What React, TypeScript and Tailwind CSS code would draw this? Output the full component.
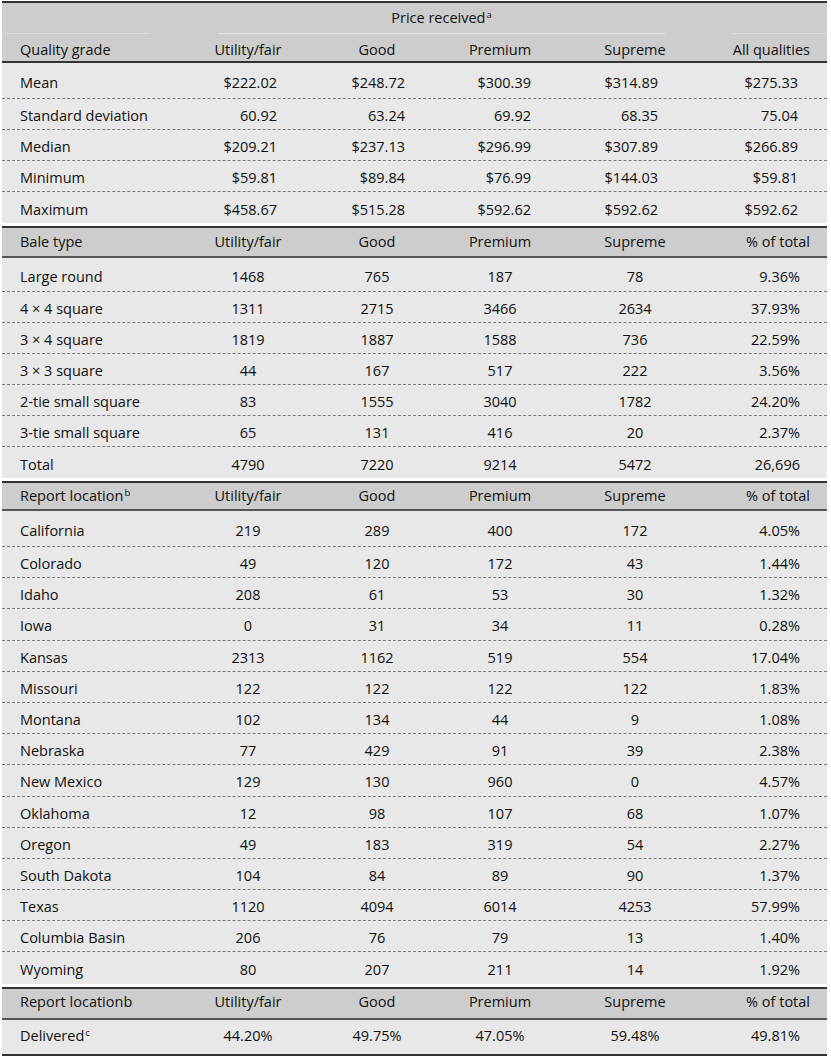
import React from "react";

const GRID = "grid grid-cols-[188px_116px_142px_104px_166px_109px]";

// value alignment per column
const money = [
  "pr-[29px] text-right",
  "pr-[43px] text-right",
  "pr-[21px] text-right",
  "pr-[60px] text-right",
  "pr-[29px] text-right",
];
const centered = ["text-center", "text-center", "text-center", "text-center", "pr-[27px] text-right"];
const headAlign = ["text-center", "text-center", "text-center", "text-center", "pr-[17px] text-right"];

const grades = ["Utility/fair", "Good", "Premium", "Supreme"];

const priceRows: [string, string[]][] = [
  ["Mean", ["$222.02", "$248.72", "$300.39", "$314.89", "$275.33"]],
  ["Standard deviation", ["60.92", "63.24", "69.92", "68.35", "75.04"]],
  ["Median", ["$209.21", "$237.13", "$296.99", "$307.89", "$266.89"]],
  ["Minimum", ["$59.81", "$89.84", "$76.99", "$144.03", "$59.81"]],
  ["Maximum", ["$458.67", "$515.28", "$592.62", "$592.62", "$592.62"]],
];

const baleRows: [string, string[]][] = [
  ["Large round", ["1468", "765", "187", "78", "9.36%"]],
  ["4 × 4 square", ["1311", "2715", "3466", "2634", "37.93%"]],
  ["3 × 4 square", ["1819", "1887", "1588", "736", "22.59%"]],
  ["3 × 3 square", ["44", "167", "517", "222", "3.56%"]],
  ["2-tie small square", ["83", "1555", "3040", "1782", "24.20%"]],
  ["3-tie small square", ["65", "131", "416", "20", "2.37%"]],
  ["Total", ["4790", "7220", "9214", "5472", "26,696"]],
];

const locationRows: [string, string[]][] = [
  ["California", ["219", "289", "400", "172", "4.05%"]],
  ["Colorado", ["49", "120", "172", "43", "1.44%"]],
  ["Idaho", ["208", "61", "53", "30", "1.32%"]],
  ["Iowa", ["0", "31", "34", "11", "0.28%"]],
  ["Kansas", ["2313", "1162", "519", "554", "17.04%"]],
  ["Missouri", ["122", "122", "122", "122", "1.83%"]],
  ["Montana", ["102", "134", "44", "9", "1.08%"]],
  ["Nebraska", ["77", "429", "91", "39", "2.38%"]],
  ["New Mexico", ["129", "130", "960", "0", "4.57%"]],
  ["Oklahoma", ["12", "98", "107", "68", "1.07%"]],
  ["Oregon", ["49", "183", "319", "54", "2.27%"]],
  ["South Dakota", ["104", "84", "89", "90", "1.37%"]],
  ["Texas", ["1120", "4094", "6014", "4253", "57.99%"]],
  ["Columbia Basin", ["206", "76", "79", "13", "1.40%"]],
  ["Wyoming", ["80", "207", "211", "14", "1.92%"]],
];

const Sup = ({ children }: { children: React.ReactNode }) => (
  <sup className="text-[9.5px] ml-[1px]">{children}</sup>
);

function HeadRow({
  label,
  last,
  height,
}: {
  label: React.ReactNode;
  last: string;
  height: string;
}) {
  return (
    <div className={`${GRID} ${height} items-center bg-[#cdcdcd]`}>
      <div className="pl-[18px]">{label}</div>
      {[...grades, last].map((g, i) => (
        <div key={i} className={headAlign[i]}>
          {g}
        </div>
      ))}
    </div>
  );
}

function DataRow({
  label,
  values,
  align,
  height,
  dashed,
}: {
  label: React.ReactNode;
  values: string[];
  align: string[];
  height: string;
  dashed: boolean;
}) {
  return (
    <div
      className={`${GRID} ${height} items-center ${
        dashed ? "border-b border-dashed border-[#7a7a7a]" : ""
      }`}
    >
      <div className="pl-[18px]">{label}</div>
      {values.map((v, i) => (
        <div key={i} className={align[i]}>
          {v}
        </div>
      ))}
    </div>
  );
}

function Body({
  rows,
  align,
  first,
  rest,
}: {
  rows: [string, string[]][];
  align: string[];
  first: string;
  rest: string;
}) {
  return (
    <div className="bg-[#e8e8e8]">
      {rows.map(([l, v], i) => (
        <DataRow
          key={l}
          label={l}
          values={v}
          align={align}
          height={i === 0 ? first : rest}
          dashed={i < rows.length - 1}
        />
      ))}
    </div>
  );
}

const Break = () => (
  <>
    <div className="h-[3px] bg-white" />
    <div className="h-[2px] bg-[#333333]" />
  </>
);

export default function App() {
  return (
    <div
      className="w-[831px] h-[1059px] bg-white pt-[1px] pl-[2px] text-[14.5px] leading-[20px] text-[#111111]"
      style={{ fontFamily: '"Open Sans", "Noto Sans", sans-serif' }}
    >
      <div className="w-[825px]">
        <div className="h-[2px] bg-[#333333]" />

        {/* price header */}
        <div className={`${GRID} h-[31px] bg-[#cdcdcd]`}>
          <div className="flex flex-col">
            <div className="flex-1" />
            <div className="w-[148px] h-[1px] bg-[#dddddd]" />
          </div>
          <div className="col-span-4 ml-[28px] mr-[53px] flex flex-col">
            <div className="flex-1 flex items-center justify-center">
              <span>
                Price received<Sup>a</Sup>
              </span>
            </div>
            <div className="h-[1px] bg-[#e3e3e3]" />
          </div>
          <div className="flex flex-col pl-[14px]">
            <div className="flex-1" />
            <div className="h-[1px] bg-[#dddddd]" />
          </div>
        </div>
        <div className={`${GRID} h-[27px] items-center pt-[5px] bg-[#cdcdcd]`}>
          <div className="pl-[18px]">Quality grade</div>
          {[...grades, "All qualities"].map((g, i) => (
            <div key={i} className={headAlign[i]}>
              {g}
            </div>
          ))}
        </div>
        <div className="h-[2px] bg-[#333333]" />
        <Body rows={priceRows} align={money} first="h-[36px] pt-[4px]" rest="h-[31px] pt-[4px]" />

        <Break />
        <HeadRow label="Bale type" last="% of total" height="h-[28px]" />
        <div className="h-[2px] bg-[#555555]" />
        <Body rows={baleRows} align={centered} first="h-[34px] pt-[4px]" rest="h-[31px] pt-[4px]" />

        <Break />
        <HeadRow
          label={
            <span>
              Report location<Sup>b</Sup>
            </span>
          }
          last="% of total"
          height="h-[26px]"
        />
        <div className="h-[2px] bg-[#555555]" />
        <Body
          rows={locationRows}
          align={centered}
          first="h-[36px] pt-[4px]"
          rest="h-[31.2px] pt-[4px]"
        />

        <Break />
        <HeadRow label="Report locationb" last="% of total" height="h-[29px] pb-[3px]" />
        <div className="h-[2px] bg-[#555555]" />
        <div className="bg-[#e8e8e8]">
          <DataRow
            label={
              <span>
                Delivered<Sup>c</Sup>
              </span>
            }
            values={["44.20%", "49.75%", "47.05%", "59.48%", "49.81%"]}
            align={centered}
            height="h-[34px] pb-[2px]"
            dashed={false}
          />
        </div>
        <div className="h-[2px] bg-[#333333]" />
      </div>
    </div>
  );
}
